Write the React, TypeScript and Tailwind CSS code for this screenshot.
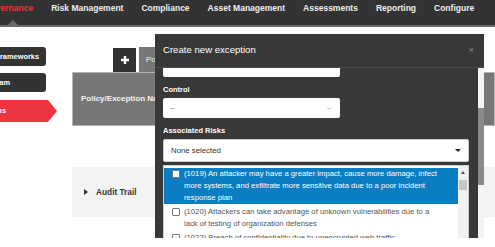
import { ChevronDown } from "lucide-react";

const navItems = ["Risk Management", "Compliance", "Asset Management", "Assessments", "Reporting", "Configure"];

const risks = [
  {
    id: 1019,
    text: "An attacker may have a greater impact, cause more damage, infect more systems, and exfiltrate more sensitive data due to a poor incident response plan",
  },
  { id: 1020, text: "Attackers can take advantage of unknown vulnerabilities due to a lack of testing of organization defenses" },
  { id: 1022, text: "Breach of confidentiality due to unencrypted web traffic" },
];

const SideButton: React.FC<{ label: string; pad: string }> = ({ label, pad }) => (
  <div
    className={`flex h-[19px] w-[46px] items-center justify-end overflow-hidden whitespace-nowrap rounded-r-[3px] bg-[#333] text-[7.4px] font-bold text-white ${pad}`}
  >
    <span>{label}</span>
  </div>
);

export default function App() {
  return (
    <div className="relative h-[247px] w-[495px] overflow-hidden bg-white font-['Liberation_Sans',Arial,sans-serif]">
      {/* top menu */}
      <nav className="flex h-[27px] border-b-2 border-[#6b6b6b] bg-[#333]">
        <div className="relative -ml-[25px] whitespace-nowrap px-[9px] pt-[3px] text-[8.5px] font-bold leading-[10px] text-[#e8323c]">
          Governance
          <span className="absolute left-[33px] top-[20px] h-0 w-0 border-x-[5px] border-b-[5px] border-x-transparent border-b-[#6b6b6b]" />
        </div>
        {navItems.map((item) => (
          <div key={item} className="whitespace-nowrap px-[9px] pt-[3px] text-[8.5px] font-bold leading-[10px] text-[#eee]">
            {item}
          </div>
        ))}
      </nav>

      <div className="flex">
        {/* left menu */}
        <aside className="flex w-[72px] shrink-0 flex-col pt-[20px]">
          <SideButton label="Define Control Frameworks" pad="pr-[7px]" />
          <div className="mt-[7px]">
            <SideButton label="Document Program" pad="pr-[36px]" />
          </div>
          <div className="mt-[8px] flex">
            <div className="flex h-[22px] w-[48px] items-center justify-end overflow-hidden whitespace-nowrap bg-[#ee3340] pr-[42px] text-[7.4px] font-bold text-white">
              <span>Define Exceptions</span>
            </div>
            <div className="h-0 w-0 border-y-[11px] border-l-[9px] border-y-transparent border-l-[#ee3340]" />
          </div>
        </aside>

        {/* page content */}
        <main className="flex min-w-0 flex-1 flex-col pt-[20px]">
          <div className="ml-[41px] flex items-end gap-[3px]">
            <div className="flex h-[24px] w-[23px] items-center justify-center bg-[#333]">
              <svg width="10" height="10" viewBox="0 0 10 10">
                <path d="M5 1v8M1 5h8" stroke="white" strokeWidth="2.4" />
              </svg>
            </div>
            <div className="flex h-[25px] items-center whitespace-nowrap bg-[#777] px-[7px] text-[8px] text-[#eee]">Policies</div>
          </div>
          <div className="flex h-[54px] items-center whitespace-nowrap border border-[#b5b5b5] bg-[#777] pl-[8px] text-[8px] font-bold text-[#f2f2f2]">
            Policy/Exception Name
          </div>
          <div className="mt-[41px] flex h-[50px] items-center gap-[8px] bg-[#f3f3f3] pl-[12px] text-[8.3px] font-bold text-[#333]">
            <span className="h-0 w-0 border-y-[3px] border-l-[4px] border-y-transparent border-l-[#333]" />
            Audit Trail
          </div>
        </main>
      </div>

      {/* modal */}
      <div className="absolute left-[155px] top-[34px] flex h-[204px] w-[329px] flex-col bg-[#383838]">
        <div className="flex h-[34px] shrink-0 items-center justify-between border-b border-[#4a4a4a] pl-[8px] pr-[10px]">
          <span className="text-[9.6px] text-white">Create new exception</span>
          <span className="text-[9px] text-[#8a8a8a]">×</span>
        </div>
        <div className="flex min-h-0 flex-1">
          <div className="min-w-0 flex-1 overflow-hidden pl-[8px] pr-[9px]">
            <div className="-mt-[11px] h-[20px] w-[177px] rounded-[2px] bg-white" />
            <div className="mt-[8px] text-[7.5px] font-bold leading-[10px] text-white">Control</div>
            <div className="mt-[3px] flex h-[20px] w-[177px] items-center justify-between rounded-[2px] bg-white px-[7px] text-[7.8px] text-[#666]">
              <span>--</span>
              <ChevronDown size={7} strokeWidth={1.5} className="text-[#666]" />
            </div>
            <div className="mt-[8px] text-[7.5px] font-bold leading-[10px] text-white">Associated Risks</div>
            <div className="mt-[3px] flex h-[23px] items-center justify-between rounded-[2px] border border-[#ccc] bg-white px-[7px] text-[7.8px] text-[#333]">
              <span>None selected</span>
              <span className="h-0 w-0 border-x-[3px] border-t-[3px] border-x-transparent border-t-[#222]" />
            </div>
            <div className="mt-[3px] flex border border-[#ccc] bg-white">
              <ul className="min-w-0 flex-1 pt-[2px]">
                {risks.map((risk, i) => (
                  <li
                    key={risk.id}
                    className={
                      i === 0
                        ? "flex gap-[4px] bg-[#0b7dc2] pl-[8px] pr-[17px] text-[7.7px] leading-[12px] text-white"
                        : "flex gap-[4px] pl-[8px] pr-[17px] pt-[2px] text-[7.7px] leading-[12px] text-[#555]"
                    }
                  >
                    <span className="mt-[2px] h-[8px] w-[8px] shrink-0 rounded-[1px] border border-[#777] bg-white" />
                    <span>{`(${risk.id}) ${risk.text}`}</span>
                  </li>
                ))}
              </ul>
              <div className="flex w-[10px] shrink-0 flex-col items-center bg-[#f1f1f1] pt-[5px]">
                <span className="h-0 w-0 border-x-[2.5px] border-b-[3px] border-x-transparent border-b-[#555]" />
                <span className="mt-[6px] h-[10px] w-[8px] bg-[#c6c6c6]" />
              </div>
            </div>
          </div>
          <div className="flex w-[6px] shrink-0 flex-col bg-[#f3f3f3]">
            <div className="mt-[40px] h-[77px] bg-[#8a8a8a]" />
          </div>
        </div>
      </div>
    </div>
  );
}
